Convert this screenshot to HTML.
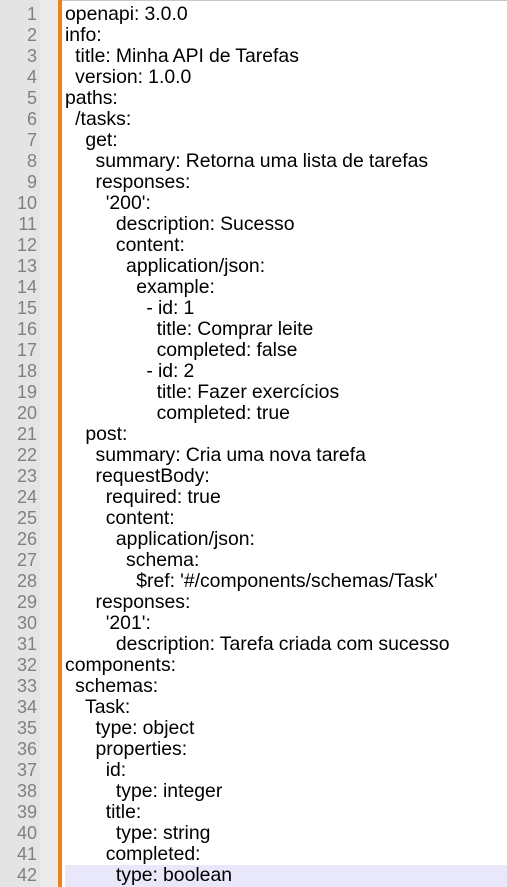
<!DOCTYPE html>
<html><head><meta charset="utf-8"><style>
html,body{margin:0;padding:0;background:#fff;width:507px;height:887px;overflow:hidden}
.wrap{position:relative;width:507px;height:887px;font-family:"Liberation Sans",sans-serif;font-size:17px}
.g1{position:absolute;left:0;top:0;width:40px;height:887px;background:#e4e4e4}
.g2{position:absolute;left:40px;top:0;width:18px;height:887px;background:#ebebeb}
.bar{position:absolute;left:58px;top:0;width:4px;height:887px;background:#f0821e}
.topl{position:absolute;left:62px;top:0;width:445px;height:1px;background:#c8c8c8}
.hl{position:absolute;left:65px;top:865px;width:442px;height:22px;background:#e8e8fa}
.nums{position:absolute;left:0;top:4px;width:37px;text-align:right;color:#808080;line-height:21px;font-size:18px}
.code{position:absolute;left:65px;top:4px;white-space:pre;color:#000;margin:0;font-family:"Liberation Sans",sans-serif;font-size:19.4px;line-height:21px;word-spacing:-0.3px}
</style></head><body><div class="wrap">
<div class="g1"></div><div class="g2"></div><div class="bar"></div><div class="topl"></div><div class="hl"></div>
<div class="nums">1<br>2<br>3<br>4<br>5<br>6<br>7<br>8<br>9<br>10<br>11<br>12<br>13<br>14<br>15<br>16<br>17<br>18<br>19<br>20<br>21<br>22<br>23<br>24<br>25<br>26<br>27<br>28<br>29<br>30<br>31<br>32<br>33<br>34<br>35<br>36<br>37<br>38<br>39<br>40<br>41<br>42</div>
<pre class="code">openapi: 3.0.0
info:
  title: Minha API de Tarefas
  version: 1.0.0
paths:
  /tasks:
    get:
      summary: Retorna uma lista de tarefas
      responses:
        '200':
          description: Sucesso
          content:
            application/json:
              example:
                - id: 1
                  title: Comprar leite
                  completed: false
                - id: 2
                  title: Fazer exercícios
                  completed: true
    post:
      summary: Cria uma nova tarefa
      requestBody:
        required: true
        content:
          application/json:
            schema:
              $ref: '#/components/schemas/Task'
      responses:
        '201':
          description: Tarefa criada com sucesso
components:
  schemas:
    Task:
      type: object
      properties:
        id:
          type: integer
        title:
          type: string
        completed:
          type: boolean</pre>
</div></body></html>
